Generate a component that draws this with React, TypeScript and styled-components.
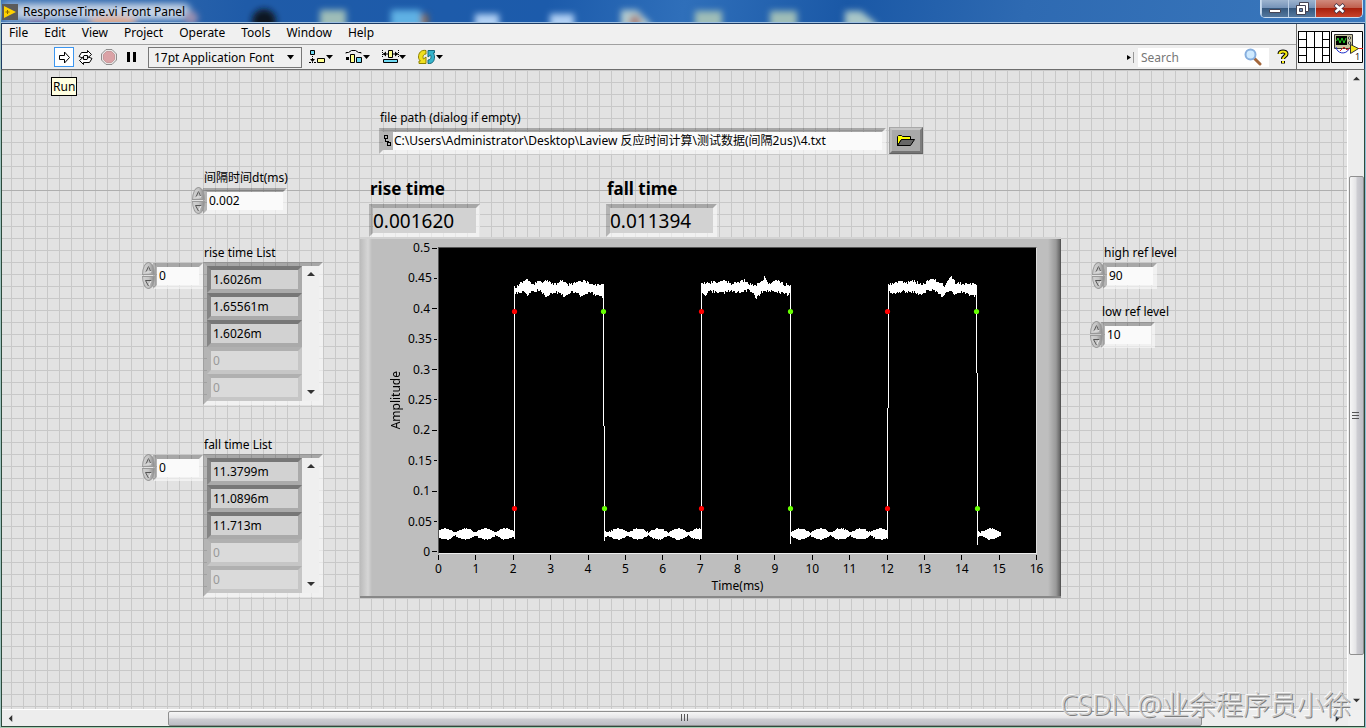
import React from "react";
import styled, { createGlobalStyle, css } from "styled-components";

const GlobalStyle = createGlobalStyle`
  * { box-sizing: border-box; }
  body {
    margin: 0;
    font-family: "Noto Sans", "Noto Sans CJK SC", sans-serif;
    font-size: 12px;
    line-height: 18px;
    color: #000;
  }
  button, input, select { font: inherit; color: inherit; margin: 0; border-radius: 0; }
  button { padding: 0; border: 0; background: none; }
`;

const AppWindow = styled.div`
  position: relative;
  display: flex;
  flex-direction: column;
  min-height: 100vh;
  overflow: hidden;
  background: #b4d3c4;
  border-left: 1px solid #9fc4c0;
  border-right: 1px solid #8fc0d4;
  border-bottom: 1px solid #a9cfb4;
`;

/* ---------- title bar ---------- */

const TitleBar = styled.header`
  position: relative;
  display: flex;
  justify-content: space-between;
  height: 23px;
  overflow: hidden;
  background: linear-gradient(100deg, #3e74b4 0%, #1f5ba8 18%, #1c5bab 40%, #2f6fba 50%, #1a58a6 62%, #2e6ab2 75%, #3a78bd 100%);
  border-bottom: 1px solid #9fc0e2;
`;

const Backdrop = styled.svg`
  position: absolute;
  left: 0;
  top: 0;
`;

const Title = styled.h1`
  position: relative;
  display: flex;
  align-items: center;
  gap: 5px;
  margin: 0;
  padding: 2px 0 0 1px;
  font-size: 12px;
  font-weight: 400;
`;

const WindowButtons = styled.div`
  position: relative;
  display: flex;
  height: 18px;
  margin-right: 2px;
  border: 1px solid #c9dcf0;
  border-top: 0;
  border-radius: 0 0 5px 5px;
  overflow: hidden;
`;

const WindowButton = styled.button<{ $close?: boolean }>`
  display: grid;
  place-items: center;
  width: ${(p) => (p.$close ? 47 : 27)}px;
  border-left: 1px solid #bcd0e6;
  background: ${(p) =>
    p.$close
      ? "linear-gradient(#d08a7c 0, #c0604e 45%, #a8200c 50%, #c8432a 100%)"
      : "linear-gradient(#9db4cf 0, #7694b9 45%, #36597f 50%, #53779e 100%)"};
`;

/* ---------- menu and tool bar ---------- */

const Header = styled.div`
  display: flex;
  background: #f0f0f0;
  border-top: 1px solid #1c3b63;
  border-bottom: 1px solid #6d6d6d;
  border-left: 1px solid #1c3b63;
  border-right: 1px solid #1c3b63;
  height: 47px;
`;

const Bars = styled.div`
  flex: 1;
  min-width: 0;
`;

const MenuBar = styled.nav`
  display: flex;
  align-items: center;
  gap: 16px;
  height: 21px;
  padding: 0 7px 2px;
  border-bottom: 1px solid #a0a0a0;
`;

const MenuItem = styled.button``;

const ToolBar = styled.div`
  position: relative;
  display: flex;
  align-items: center;
  height: 24px;
  padding-left: 52px;
  background: #eee;
`;

const Tool = styled.button<{ $active?: boolean; $wide?: boolean }>`
  display: grid;
  place-items: center;
  width: ${(p) => (p.$wide ? 37 : p.$active ? 20 : 23)}px;
  height: 20px;
  border: ${(p) => (p.$active ? "1px solid #3c96f0" : "0")};
  background: ${(p) => (p.$active ? "#fff" : "none")};
`;

const FontPicker = styled.div`
  position: relative;
  display: flex;
  width: 154px;
  height: 21px;
  margin: 0 0 0 5px;
  border: 1px solid #777;
`;

const FontSelect = styled.select`
  appearance: none;
  width: 100%;
  padding: 1px 5px 0;
  border: 0;
  background: #f0f0f0;
`;

const PickerArrow = styled.svg`
  position: absolute;
  right: 7px;
  top: 7px;
  pointer-events: none;
`;

const ToolTip = styled.div`
  position: absolute;
  z-index: 2;
  left: 49px;
  top: 32px;
  height: 19px;
  padding: 0 1px;
  border: 1px solid #000;
  background: #ffffe1;
  line-height: 17px;
`;

const Search = styled.div`
  display: flex;
  align-items: center;
  margin-left: auto;
  gap: 4px;
`;

const SearchBox = styled.label`
  display: flex;
  align-items: center;
  width: 131px;
  height: 19px;
  padding: 0 7px 0 3px;
  background: #fff;
`;

const SearchInput = styled.input`
  flex: 1;
  min-width: 0;
  padding: 1px 0 0;
  border: 0;
  outline: 0;
  background: none;
  &::placeholder { color: #777; opacity: 1; }
`;

const HelpButton = styled.button`
  display: grid;
  place-items: center;
  width: 20px;
  margin: 0 3px 0 4px;
`;

const PaneIcons = styled.div`
  display: flex;
  align-items: center;
  gap: 1px;
  width: 68px;
  padding: 0 1px;
  border-left: 1px solid #6d6d6d;
`;

/* ---------- front panel ---------- */

const Body = styled.div`
  flex: 1;
  display: grid;
  grid-template-columns: minmax(0, 1fr) 16px;
  grid-template-rows: 1fr 16px;
  border: 1px solid #2d4a3c;
  border-top: 0;
  background: #f0f0f0;
`;

const Panel = styled.main`
  display: flex;
  align-items: flex-start;
  min-width: 0;
  padding-left: 139px;
  border-right: 1px solid #fff;
  border-bottom: 1px solid #fff;
  background:
    linear-gradient(#afafaf, #afafaf) 0 120px / 100% 1px no-repeat,
    repeating-linear-gradient(90deg, transparent 0 9px, #c8c8c8 9px 10px, transparent 10px 12px),
    repeating-linear-gradient(#c8c8c8 0 1px, transparent 1px 12px),
    #e2e2e2;
`;

const ListColumn = styled.div`
  display: flex;
  flex-direction: column;
  gap: 30px;
  width: 182px;
  padding-top: 99px;
`;

const GraphColumn = styled.div`
  flex: 1;
  min-width: 0;
  margin: 0 29px 0 37px;
  padding-top: 39px;
`;

const RefColumn = styled.div`
  display: flex;
  flex-direction: column;
  gap: 14px;
  width: 94px;
  margin-right: 163px;
  padding-top: 174px;
`;

const Caption = styled.label<{ $indent?: number }>`
  display: block;
  width: max-content;
  height: 18px;
  margin-left: ${(p) => p.$indent ?? 0}px;
  white-space: nowrap;
`;

const bevel = css`
  border: 4px solid;
  border-color: rgba(0, 0, 0, 0.26) rgba(255, 255, 255, 0.55) rgba(255, 255, 255, 0.55) rgba(0, 0, 0, 0.2);
  background-clip: padding-box;
`;

const ControlRow = styled.div<{ $indent?: number }>`
  display: flex;
  align-items: center;
  margin-left: ${(p) => p.$indent ?? 0}px;
`;

const NumberInput = styled.input<{ $w: number }>`
  ${bevel}
  width: ${(p) => p.$w}px;
  height: 26px;
  padding: 0 2px;
  outline: 0;
  background-color: #fafafa;
`;

const SpinnerBox = styled.span`
  display: flex;
  flex-direction: column;
  gap: 1px;
  width: 13px;
  margin-right: -2px;
  z-index: 1;
`;

const SpinButton = styled.button<{ $down?: boolean }>`
  display: grid;
  place-items: center;
  height: 13px;
  border: 1px solid #999;
  border-radius: ${(p) => (p.$down ? "0 0 50% 50% / 0 0 100% 100%" : "50% 50% 0 0 / 100% 100% 0 0")};
  background: linear-gradient(90deg, #d2d2d2, #c4c4c4 50%, #8f8f8f);
`;

const ArrayRow = styled.div`
  display: flex;
  align-items: flex-start;
  padding-bottom: 1px;
`;

const ArrayFrame = styled.div`
  display: flex;
  flex: 1;
  height: 143px;
  border: 4px solid;
  border-color: rgba(0, 0, 0, 0.26) rgba(255, 255, 255, 0.55) rgba(255, 255, 255, 0.55) rgba(0, 0, 0, 0.2);
`;

const Cells = styled.div`
  display: flex;
  flex-direction: column;
  flex: 1;
`;

const Cell = styled.input`
  width: 100%;
  height: 27px;
  padding: 0 2px;
  border: 4px solid;
  border-color: #777 #aaa #aaa #858585;
  outline: 0;
  background: #d2d2d2;
  &:disabled {
    border-color: #b0b0b0 #c6c6c6 #c6c6c6 #b4b4b4;
    background: #dadada;
    color: #999;
  }
`;

const ArrayScroll = styled.div`
  display: flex;
  flex-direction: column;
  justify-content: space-between;
  width: 17px;
  padding: 4px 0 5px;
  background: #efefef;
`;

const ArrowButton = styled.button`
  display: grid;
  place-items: center;
  min-width: 14px;
  min-height: 8px;
`;

const PathRow = styled.div`
  display: flex;
  align-items: flex-start;
  gap: 3px;
  padding: 0 138px 0 19px;
`;

const PathField = styled.div`
  ${bevel}
  display: flex;
  flex: 1;
  min-width: 0;
  height: 26px;
  margin-top: 1px;
  background-color: #fafafa;
`;

const PathIcon = styled.svg`
  flex: none;
  background: #b4b4b4;
`;

const PathInput = styled.input`
  flex: 1;
  min-width: 0;
  padding: 0 1px;
  border: 0;
  outline: 0;
  background: none;
`;

const BrowseButton = styled.button`
  display: grid;
  place-items: center;
  width: 34px;
  height: 27px;
  border: 3px solid;
  border-color: #c6c6c6 #7c7c7c #747474 #bbb;
  outline: 1px solid rgba(0, 0, 0, 0.15);
  outline-offset: -1px;
  background: #a9a9a9;
`;

const Readouts = styled.div`
  display: flex;
  gap: 126px;
  padding: 23px 0 0 9px;
`;

const Readout = styled.div`
  width: 111px;
`;

const ReadoutLabel = styled.label`
  display: block;
  height: 27px;
  padding-left: 1px;
  font-size: 17px;
  font-weight: 700;
  line-height: 24px;
`;

const ReadoutValue = styled.input`
  ${bevel}
  display: block;
  width: 100%;
  height: 33px;
  padding: 0;
  outline: 0;
  background-color: #d2d2d2;
  font-size: 19px;
`;

/* ---------- graph ---------- */

const Graph = styled.section`
  display: grid;
  grid-template-columns: 24px 30px minmax(0, 1fr);
  padding: 0 24px 0 24px;
  height: 361px;
  align-content: start;
  border-top: 2px solid #d2d2d2;
  border-bottom: 2px solid #888;
  background:
    linear-gradient(90deg, #bbb 0, #d6d6d6 8px, #bebebe 12px, #bebebe calc(100% - 13px), #999 calc(100% - 5px), #666 calc(100% - 1px), #444 100%);
`;

const AxisName = styled.div<{ $vertical?: boolean }>`
  ${(p) =>
    p.$vertical
      ? css`
          align-self: center;
          justify-self: center;
          writing-mode: vertical-rl;
          transform: rotate(180deg);
          text-align: center;
        `
      : css`
          grid-column: 3;
          text-align: center;
        `}
`;

const YScale = styled.ol`
  display: flex;
  flex-direction: column;
  justify-content: space-between;
  height: 322px;
  margin: 0;
  padding: 0 1px 0 0;
  list-style: none;
`;

const YTick = styled.li`
  display: flex;
  align-items: center;
  justify-content: flex-end;
  gap: 2px;
  &::after {
    content: "";
    width: 5px;
    height: 1px;
    background: #000;
  }
`;

const PlotFrame = styled.div`
  margin: 8px 0 7px;
  border-top: 1px solid #555;
  border-left: 1px solid #555;
  border-right: 1px solid #ddd;
  border-bottom: 1px solid #eee;
  background: #000;
`;

const Plot = styled.svg`
  display: block;
  width: 100%;
  height: 304px;
`;

const XScale = styled.ol`
  grid-column: 3;
  display: flex;
  justify-content: space-between;
  margin: -6px -9px 0 -9px;
  padding: 0;
  list-style: none;
  line-height: 17px;
`;

const XTick = styled.li`
  display: flex;
  flex-direction: column;
  align-items: center;
  width: 19px;
  &::before {
    content: "";
    width: 1px;
    height: 5px;
    background: #000;
  }
`;

/* ---------- scroll bars ---------- */

const ScrollBar = styled.div<{ $vertical?: boolean }>`
  display: flex;
  flex-direction: ${(p) => (p.$vertical ? "column" : "row")};
  align-items: center;
  justify-content: space-between;
  padding: ${(p) => (p.$vertical ? "4px 0 5px" : "0 3px 0 1px")};
  background: #ededed;
`;

const Thumb = styled.div<{ $vertical?: boolean }>`
  display: grid;
  place-items: center;
  border: 1px solid #8f8f8f;
  border-radius: 2px;
  ${(p) =>
    p.$vertical
      ? css`
          width: 15px;
          height: 76%;
          margin-top: 52px;
          background: linear-gradient(90deg, #f6f6f6, #e4e4e6 45%, #cdcdd2 55%, #bdbdc4);
        `
      : css`
          width: 77%;
          height: 15px;
          margin-left: 22px;
          background: linear-gradient(#f6f6f6, #e4e4e6 45%, #cdcdd2 55%, #bdbdc4);
        `}
`;

const Watermark = styled.div`
  position: absolute;
  right: 14px;
  bottom: 2px;
  font-family: "Open Sans", "Noto Sans CJK SC", sans-serif;
  font-size: 27px;
  font-weight: 300;
  line-height: 40px;
  color: #c9c9c9;
  text-shadow: 1px 1px 0 #7d7d7d, -1px -1px 0 #f8f8f8;
  white-space: nowrap;
  pointer-events: none;
`;

/* ---------- signal data ---------- */

type Knot = [number, number];

const interpolate = (knots: Knot[], x: number) => {
  for (let i = 1; i < knots.length; i++) {
    const [x0, y0] = knots[i - 1];
    const [x1, y1] = knots[i];
    if (x <= x1) return y0 + ((y1 - y0) * (x - x0)) / (x1 - x0);
  }
  return knots[knots.length - 1][1];
};

const noise = (n: number) => {
  const v = Math.sin(n * 127.1 + 11.7) * 43758.5453;
  return v - Math.floor(v);
};

const highBands: { start: number; top: Knot[]; bottom: Knot[] }[] = [
  {
    start: 75,
    top: [[0, 41], [5, 36], [13, 31], [18, 36], [25, 34], [33, 33], [40, 37], [47, 33], [53, 37], [63, 35], [71, 33], [77, 37], [89, 37]],
    bottom: [[0, 45], [8, 43], [13, 46], [25, 41], [32, 49], [37, 45], [43, 44], [50, 48], [58, 43], [68, 48], [75, 43], [82, 47], [89, 49]],
  },
  {
    start: 262,
    top: [[0, 36], [8, 35], [23, 33], [31, 36], [43, 33], [53, 38], [61, 33], [63, 29], [67, 36], [76, 33], [81, 36], [89, 38]],
    bottom: [[0, 44], [4, 47], [8, 43], [23, 44], [30, 42], [35, 44], [48, 42], [55, 49], [61, 43], [73, 43], [85, 46], [89, 46]],
  },
  {
    start: 449,
    top: [[0, 37], [8, 34], [18, 35], [24, 33], [34, 37], [43, 30], [51, 35], [56, 38], [62, 28], [67, 35], [88, 37]],
    bottom: [[0, 43], [8, 45], [14, 43], [24, 43], [33, 47], [39, 42], [46, 42], [54, 48], [61, 42], [66, 47], [73, 43], [83, 48], [88, 48]],
  },
];

const lowBands = [
  { start: 0, end: 74, phase: 6 },
  { start: 165, end: 261, phase: 179 },
  { start: 352, end: 448, phase: 361 },
  { start: 538, end: 561, phase: 551 },
];

const column = (x: number, top: number, bottom: number) =>
  `M${x} ${Math.round(top)}h1V${Math.round(bottom)}h-1z`;

const signalPath = [
  ...highBands.flatMap(({ start, top, bottom }) => {
    const last = top[top.length - 1][0];
    return Array.from({ length: last + 1 }, (_, i) =>
      column(
        start + i,
        interpolate(top, i) + (noise(start + i) - 0.6) * 3,
        interpolate(bottom, i) + (noise(start + i + 900) - 0.4) * 3,
      ),
    );
  }),
  ...lowBands.flatMap(({ start, end, phase }) =>
    Array.from({ length: end - start + 1 }, (_, i) => {
      const x = start + i;
      const swell = Math.abs(Math.cos(((x - phase) * Math.PI) / 20));
      return column(x, 284 - swell * 4 + noise(x), 287 + swell * 4 + noise(x + 40));
    }),
  ),
].join("");

const edgePath =
  "M75 291V38h1V291zM164 178V40h1V178zM165 293V178h1V293zM262 291V38h1V291zM351 296V38h1V296zM448 291V160h1V291zM449 160V38h1V160zM537 125V38h1V125zM538 297V125h1V297z";

const risePoints: Knot[] = [[75, 63], [75, 260], [262, 63], [262, 260], [448, 63], [448, 260]];
const fallPoints: Knot[] = [[164, 63], [165, 260], [351, 63], [351, 260], [537, 63], [538, 260]];

/* ---------- small drawings ---------- */

const Triangle = ({ dir, size = 7 }: { dir: "up" | "down" | "left" | "right"; size?: number }) => {
  const points = {
    up: "0,6 4,2 8,6",
    down: "0,2 8,2 4,6",
    left: "6,0 2,4 6,8",
    right: "2,0 6,4 2,8",
  }[dir];
  return (
    <svg width={size} height={size} viewBox="0 0 8 8" aria-hidden="true">
      <polygon points={points} fill="#333" />
    </svg>
  );
};

const Spinner = ({ name }: { name: string }) => (
  <SpinnerBox>
    <SpinButton aria-label={`Increase ${name}`}>
      <svg width="7" height="8" viewBox="0 0 7 8">
        <path d="M1 7L3.500 1.500" stroke="#555" fill="none" />
        <path d="M3.500 1.500L6 7H1" stroke="#e6e6e6" fill="none" />
        <path d="M3.500 1.500L5.500 6" stroke="#555" fill="none" />
      </svg>
    </SpinButton>
    <SpinButton $down aria-label={`Decrease ${name}`}>
      <svg width="7" height="8" viewBox="0 0 7 8">
        <path d="M6.500 1L3.500 7" stroke="#eee" fill="none" />
        <path d="M6.500 1.500H.5L3.500 7" stroke="#555" fill="none" />
      </svg>
    </SpinButton>
  </SpinnerBox>
);

const TitleBackdrop = () => (
  <Backdrop width="1000" height="22" aria-hidden="true">
    <defs>
      <filter id="glass" x="-20%" y="-60%" width="140%" height="220%">
        <feGaussianBlur stdDeviation="3" />
      </filter>
    </defs>
    <g filter="url(#glass)">
      <rect x="0" y="3" width="190" height="17" rx="8" fill="#a9bfda" />
      <rect x="18" y="6" width="165" height="12" rx="6" fill="#c5d3e6" />
      <ellipse cx="112" cy="22" rx="24" ry="6" fill="#d8a58c" />
      <ellipse cx="36" cy="24" rx="12" ry="5" fill="#5a4f9c" />
      <ellipse cx="190" cy="18" rx="7" ry="7" fill="#9a8fb0" />
      <circle cx="263" cy="21" r="12" fill="#101820" />
      <rect x="319" y="10" width="26" height="20" fill="#9ebdb8" />
      <rect x="390" y="10" width="30" height="20" fill="#5fb1e4" />
      <rect x="420" y="14" width="7" height="14" fill="#8a6a50" />
      <rect x="474" y="14" width="24" height="20" fill="#b0d0f4" />
      <rect x="549" y="14" width="24" height="20" fill="#b0d0f4" />
      <path d="M620 10h16l14 14v10h-30z" fill="#b4ccd0" />
      <ellipse cx="634" cy="22" rx="6" ry="7" fill="#a88480" />
      <rect x="694" y="11" width="27" height="20" fill="#9ebdb8" />
      <rect x="769" y="11" width="27" height="20" fill="#9ebdb8" />
      <path d="M844 11h16l16 13v10h-32z" fill="#a8c6c8" />
    </g>
  </Backdrop>
);

const DropArrow = ({ x }: { x: number }) => <path d={`M${x} 6h7l-3.5 4z`} fill="#000" />;

const PathGlyph = () => (
  <PathIcon width="10" height="18" viewBox="0 0 10 18" aria-hidden="true" shapeRendering="crispEdges">
    <path d="M1.500 3.500h3v3h-3zM4.500 10.500h3v3h-3zM2.500 6v3h3v2" fill="none" stroke="#000" />
  </PathIcon>
);

type ArrayListProps = { id: string; title: string; values: string[] };

const ArrayList = ({ id, title, values }: ArrayListProps) => (
  <div>
    <Caption $indent={63} htmlFor={`${id}-0`}>{title}</Caption>
    <ArrayRow>
      <ControlRow $indent={1}>
        <Spinner name={`${title} index`} />
        <NumberInput $w={50} defaultValue="0" aria-label={`${title} index`} />
      </ControlRow>
      <ArrayFrame>
        <Cells>
          {values.map((value, i) => (
            <Cell
              key={i}
              id={`${id}-${i}`}
              aria-label={`${title} ${i}`}
              defaultValue={value}
              readOnly
              disabled={value === "0"}
            />
          ))}
        </Cells>
        <ArrayScroll>
          <ArrowButton aria-label="Scroll up"><Triangle dir="up" size={8} /></ArrowButton>
          <ArrowButton aria-label="Scroll down"><Triangle dir="down" size={8} /></ArrowButton>
        </ArrayScroll>
      </ArrayFrame>
    </ArrayRow>
  </div>
);

const menus = ["File", "Edit", "View", "Project", "Operate", "Tools", "Window", "Help"];
const yLabels = ["0.5", "0.45", "0.4", "0.35", "0.3", "0.25", "0.2", "0.15", "0.1", "0.05", "0"];
const xLabels = Array.from({ length: 17 }, (_, i) => String(i));

export default function App() {
  return (
    <AppWindow>
      <GlobalStyle />
      <TitleBar>
        <TitleBackdrop />
        <Title>
          <svg width="16" height="16" viewBox="0 0 16 16" aria-hidden="true">
            <path d="M0 0h16v16H0z" fill="#5b5b5b" />
            <path d="M2 2l12 6-12 6z" fill="#ffd200" />
            <path d="M3.500 8h4M5.500 6v4" stroke="#8a6a00" />
          </svg>
          ResponseTime.vi Front Panel
        </Title>
        <WindowButtons>
          <WindowButton aria-label="Minimize">
            <svg width="13" height="10"><path d="M.5 5.500h11v3H.5z" fill="#fff" stroke="#445" /></svg>
          </WindowButton>
          <WindowButton aria-label="Restore">
            <svg width="13" height="13" viewBox="0 0 13 13">
              <path d="M3.500 .5h9v9h-9z" fill="#fff" stroke="#445" />
              <path d="M.5 3.500h9v9h-9z" fill="#fff" stroke="#445" />
              <path d="M3.500 6.500h3v3h-3z" fill="#6d8db5" stroke="#445" />
            </svg>
          </WindowButton>
          <WindowButton $close aria-label="Close">
            <svg width="13" height="11" viewBox="0 0 13 11">
              <path d="M2 1.500l9 8M11 1.500l-9 8" stroke="#434" strokeWidth="4" />
              <path d="M2.500 2l8 7M10.500 2l-8 7" stroke="#fff" strokeWidth="2.500" />
            </svg>
          </WindowButton>
        </WindowButtons>
      </TitleBar>

      <Header>
        <Bars>
          <MenuBar>
            {menus.map((m) => <MenuItem key={m}>{m}</MenuItem>)}
          </MenuBar>
          <ToolBar>
            <Tool $active aria-label="Run">
              <svg width="13" height="13" viewBox="0 0 13 13">
                <path d="M1.500 4.500h5v-3.500l5 5.500-5 5.500V8.500h-5z" fill="#fff" stroke="#000" />
              </svg>
            </Tool>
            <Tool aria-label="Run continuously">
              <svg width="17" height="15" viewBox="0 0 17 15">
                <path d="M2 6.500L4.500 2.500h6v-2l4 4-4 3.500v-2.500H7L5.500 8z" fill="#fff" stroke="#000" />
                <path d="M15 8.500l-2.500 4h-6v2l-4-4 4-3.500v2.500H10L11.500 7z" fill="#fff" stroke="#000" />
              </svg>
            </Tool>
            <Tool aria-label="Abort">
              <svg width="16" height="16" viewBox="0 0 16 16">
                <path d="M5 .5h6L15.500 5v6L11 15.500H5L.5 11V5z" fill="#e8e4e4" stroke="#8d8d8d" />
                <path d="M5.500 2.500h5l3 3v5l-3 3h-5l-3-3v-5z" fill="#dba2a6" stroke="#c79a9c" />
              </svg>
            </Tool>
            <Tool aria-label="Pause">
              <svg width="22" height="12"><path d="M6 1h3v10H6zM12 1h3v10h-3z" /></svg>
            </Tool>
            <FontPicker>
              <FontSelect aria-label="Text settings">
                <option>17pt Application Font</option>
              </FontSelect>
              <PickerArrow width="7" height="5"><path d="M0 0h7L3.500 4.500z" /></PickerArrow>
            </FontPicker>
            <Tool $wide aria-label="Align objects">
              <svg width="26" height="16" viewBox="0 0 26 16">
                <path d="M2.500 1.500h4v4h-4z" fill="#6fd9f2" stroke="#000" />
                <path d="M9.500 9.500h7v4h-7z" fill="#ffff8c" stroke="#000" />
                <path d="M4 7h1v1H4zM4 9h1v1H4zM2 10h5l-2.500 3zM1 13h2v1H1zM4 13h1v1H4zM6 13h2v1H6z" />
                <DropArrow x={18} />
              </svg>
            </Tool>
            <Tool $wide aria-label="Distribute objects">
              <svg width="26" height="16" viewBox="0 0 26 16">
                <path d="M1 4.500v-1h2.500l3-2h4l3 2H16v1" fill="none" stroke="#000" />
                <path d="M5.500 5.500h4v8h-4z" fill="#ffff8c" stroke="#000" />
                <path d="M11.500 8.500h5v5h-5z" fill="#6fd9f2" stroke="#000" />
                <path d="M1 8h3v3H1z" />
                <DropArrow x={18} />
              </svg>
            </Tool>
            <Tool $wide aria-label="Resize objects">
              <svg width="26" height="16" viewBox="0 0 26 16">
                <path d="M1.500 10.500h14v3h-14z" fill="#6fd9f2" stroke="#000" />
                <path d="M.5 1v8M16.500 1v8" stroke="#000" strokeDasharray="1 1" />
                <path d="M1 5h5M11 5h5" stroke="#000" />
                <path d="M6.500 1.500h4v7h-4z" fill="#ffff8c" stroke="#000" />
                <path d="M1 5l3-2.500v5zM16 5l-3-2.500v5z" />
                <DropArrow x={17} />
              </svg>
            </Tool>
            <Tool $wide aria-label="Reorder">
              <svg width="28" height="16" viewBox="0 0 28 16">
                <path d="M8 1.500C3 .5.5 4 .5 8c0 2 1 3 2 4H1v2.500h7V8L5.500 10C4.500 8 5 5 8 5z" fill="#f0df20" stroke="#8d8200" />
                <path d="M10 14.500c5 .5 6.500-3 6.500-6.500 0-2-.5-3-1.500-4h1.500V1.500H10V8l2.500-2c1 2 .5 5-2.500 5z" fill="#36b4cc" stroke="#14687c" />
                <DropArrow x={18} />
              </svg>
            </Tool>
            <ToolTip role="tooltip">Run</ToolTip>

            <Search>
              <svg width="7" height="13" aria-hidden="true">
                <path d="M0 4v5l4-2.500z" />
                <path d="M6.500 1v11" stroke="#999" />
              </svg>
              <SearchBox>
                <SearchInput placeholder="Search" aria-label="Search" />
                <svg width="18" height="18" viewBox="0 0 18 18" aria-hidden="true">
                  <path d="M10.500 10.500l5.500 5.500" stroke="#a4673c" strokeWidth="3" strokeLinecap="round" />
                  <circle cx="6.500" cy="6.500" r="5" fill="#cfeaff" stroke="#86aede" strokeWidth="2" />
                </svg>
              </SearchBox>
            </Search>
            <HelpButton aria-label="Help">
              <svg width="12" height="16" viewBox="0 0 12 16">
                <path d="M2.500 5C2.500 1.500 9.500 1.500 9.500 5c0 2-3.500 2.500-3.500 5M6 12v2.500" fill="none" stroke="#000" strokeWidth="4" />
                <path d="M2.500 5C2.500 1.500 9.500 1.500 9.500 5c0 2-3.500 2.500-3.500 5M6 12v2" fill="none" stroke="#f5ea14" strokeWidth="2" />
              </svg>
            </HelpButton>
          </ToolBar>
        </Bars>
        <PaneIcons>
          <svg width="32" height="32" viewBox="0 0 32 32" shapeRendering="crispEdges" role="img" aria-label="Connector pane">
            <path d="M.5 .5h31v31H.5z" fill="#fff" stroke="#000" />
            <path d="M8.500 0v32M16.500 0v32M24.500 0v32M0 8.500h8M0 16.500h32M0 24.500h8M24 8.500h8M24 24.500h8" stroke="#000" />
          </svg>
          <svg width="32" height="32" viewBox="0 0 32 32" role="img" aria-label="VI icon">
            <path d="M.5 .5h31v31H.5z" fill="#fff" stroke="#000" />
            <path d="M3.500 3.500h18v14h-18z" fill="#c8c4a0" stroke="#333" />
            <path d="M5 5h11v9H5z" fill="#000" />
            <path d="M5.500 10l1.500-3 2 5 2-5 2 5 2-5" fill="none" stroke="#24d024" />
            <circle cx="18.500" cy="7" r="1.200" fill="#fff" stroke="#333" />
            <circle cx="18.500" cy="12" r="1.200" fill="#fff" stroke="#333" />
            <path d="M5 16c1 7 10 8 13 2" fill="none" stroke="#1e2ec8" />
            <path d="M9 20l4-4 3 3 4-3M26 17.500h6" fill="none" stroke="#e02020" />
            <path d="M19.500 13.500l8 4-8 5z" fill="#f6e81a" stroke="#333" />
            <text x="24" y="29" fontSize="9" fontFamily="Open Sans, sans-serif">1</text>
          </svg>
        </PaneIcons>
      </Header>

      <Body>
        <Panel>
          <ListColumn>
            <div>
              <Caption $indent={63} htmlFor="dt">间隔时间dt(ms)</Caption>
              <ControlRow $indent={51}>
                <Spinner name="dt" />
                <NumberInput id="dt" $w={84} defaultValue="0.002" />
              </ControlRow>
            </div>
            <ArrayList id="rise-list" title="rise time List" values={["1.6026m", "1.65561m", "1.6026m", "0", "0"]} />
            <ArrayList id="fall-list" title="fall time List" values={["11.3799m", "11.0896m", "11.713m", "0", "0"]} />
          </ListColumn>

          <GraphColumn>
            <Caption $indent={20} htmlFor="path">file path (dialog if empty)</Caption>
            <PathRow>
              <PathField>
                <PathGlyph />
                <PathInput id="path" defaultValue={"C:\\Users\\Administrator\\Desktop\\Laview 反应时间计算\\测试数据(间隔2us)\\4.txt"} />
              </PathField>
              <BrowseButton aria-label="Browse">
                <svg width="20" height="13" viewBox="0 0 20 13">
                  <path d="M1.500 11.500V2.500l1-1h3l1 1h8v3H5.500z" fill="#ffff00" stroke="#000" />
                  <path d="M1.500 11.500l4-6h13l-4 6z" fill="#666" stroke="#000" />
                </svg>
              </BrowseButton>
            </PathRow>
            <Readouts>
              <Readout>
                <ReadoutLabel htmlFor="rise">rise time</ReadoutLabel>
                <ReadoutValue id="rise" readOnly defaultValue="0.001620" />
              </Readout>
              <Readout>
                <ReadoutLabel htmlFor="fall">fall time</ReadoutLabel>
                <ReadoutValue id="fall" readOnly defaultValue="0.011394" />
              </Readout>
            </Readouts>
            <Graph>
              <AxisName $vertical>Amplitude</AxisName>
              <YScale>{yLabels.map((l) => <YTick key={l}>{l}</YTick>)}</YScale>
              <PlotFrame>
                <Plot viewBox="0 0 597 304" preserveAspectRatio="none" role="img" aria-label="Amplitude over time">
                  <path d={signalPath + edgePath} fill="#fff" shapeRendering="crispEdges" />
                  {risePoints.map(([x, y]) => <circle key={`${x}-${y}`} cx={x + 0.5} cy={y + 0.5} r="2.600" fill="#f00" />)}
                  {fallPoints.map(([x, y]) => <circle key={`${x}-${y}`} cx={x + 0.5} cy={y + 0.5} r="2.600" fill="#6f0" />)}
                </Plot>
              </PlotFrame>
              <XScale>{xLabels.map((l) => <XTick key={l}>{l}</XTick>)}</XScale>
              <AxisName>Time(ms)</AxisName>
            </Graph>
          </GraphColumn>

          <RefColumn>
            <div>
              <Caption $indent={14} htmlFor="high">high ref level</Caption>
              <ControlRow $indent={2}>
                <Spinner name="high ref level" />
                <NumberInput id="high" $w={54} defaultValue="90" />
              </ControlRow>
            </div>
            <div>
              <Caption $indent={12} htmlFor="low">low ref level</Caption>
              <ControlRow>
                <Spinner name="low ref level" />
                <NumberInput id="low" $w={54} defaultValue="10" />
              </ControlRow>
            </div>
          </RefColumn>
        </Panel>

        <ScrollBar $vertical>
          <ArrowButton aria-label="Scroll up"><Triangle dir="up" /></ArrowButton>
          <Thumb $vertical>
            <svg width="8" height="8"><path d="M0 1.500h7M0 4.500h7M0 7.500h7" stroke="#555" /></svg>
          </Thumb>
          <ArrowButton aria-label="Scroll down"><Triangle dir="down" /></ArrowButton>
        </ScrollBar>
        <ScrollBar>
          <ArrowButton aria-label="Scroll left"><Triangle dir="left" /></ArrowButton>
          <Thumb>
            <svg width="8" height="8"><path d="M.5 0v7M3.500 0v7M6.500 0v7" stroke="#555" /></svg>
          </Thumb>
          <ArrowButton aria-label="Scroll right"><Triangle dir="right" /></ArrowButton>
        </ScrollBar>
      </Body>
      <Watermark>CSDN @业余程序员小徐</Watermark>
    </AppWindow>
  );
}
